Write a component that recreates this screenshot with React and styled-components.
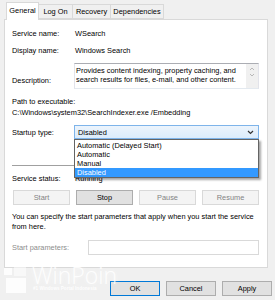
import React from 'react'
import styled, { createGlobalStyle } from 'styled-components'

const Global = createGlobalStyle`
  html, body { margin: 0; padding: 0; background: #f0f0f0; }
  body { font-family: "Liberation Sans", Arial, sans-serif; font-size: 7.4px; color: #000; }
`

const Dialog = styled.div`
  position: relative;
  width: 275px;
  height: 300px;
  overflow: hidden;
  background: #f0f0f0;
  display: flex;
  flex-direction: column;
`

const TabStrip = styled.div`
  display: flex;
  align-items: flex-end;
  height: 19px;
  padding-left: 6px;
  position: relative;
  z-index: 1;
`

const Tab = styled.div`
  box-sizing: border-box;
  width: ${p => p.$w}px;
  height: ${p => (p.$active ? 18 : 15)}px;
  margin-bottom: ${p => (p.$active ? -1 : 0)}px;
  border: 1px solid #d9d9d9;
  border-bottom: ${p => (p.$active ? 'none' : '1px solid #d9d9d9')};
  margin-left: ${p => (p.$first ? 0 : -1)}px;
  background: ${p => (p.$active ? '#fff' : '#f0f0f0')};
  display: flex;
  align-items: center;
  justify-content: center;
  padding-bottom: ${p => (p.$active ? 2 : 0)}px;
  white-space: nowrap;
`

const Panel = styled.div`
  box-sizing: border-box;
  margin-left: 4px;
  width: 264px;
  height: 249px;
  border: 1px solid #d9d9d9;
  background: #fff;
  padding: 8px 8px 0 7px;
  display: flex;
  flex-direction: column;
`

const Row = styled.div`
  display: flex;
  align-items: ${p => p.$align || 'center'};
  height: ${p => p.$h || 10}px;
  margin-top: ${p => p.$mt || 0}px;
`

const Label = styled.div`
  width: ${p => p.$w || 62}px;
  flex-shrink: 0;
  padding-top: ${p => p.$pt || 0}px;
  color: ${p => (p.$disabled ? '#8d8d8d' : '#000')};
  white-space: nowrap;
`

const Value = styled.div`
  padding-left: ${p => (p.$flush ? 0 : 1)}px;
  white-space: nowrap;
`

const TextBox = styled.div`
  box-sizing: border-box;
  flex: 1;
  height: 100%;
  border: 1px solid #abadb3;
  border-color: #abadb3 #e2e3ea #e3e9ef #e2e3ea;
  display: flex;
  background: #fff;
`

const DescText = styled.div`
  flex: 1;
  padding: 2px 1px 0 1px;
  line-height: 9px;
`

const ScrollBar = styled.div`
  width: 12px;
  background: #f0f0f0;
  display: flex;
  flex-direction: column;
  align-items: center;
  padding-top: 3px;
  gap: 2px;
`

const Select = styled.div`
  box-sizing: border-box;
  flex: 1;
  height: 100%;
  border: 1px solid #7eb4ea;
  background: linear-gradient(#ecf4fc, #dcecfc);
  display: flex;
  align-items: center;
  justify-content: space-between;
  padding: 0 4px 0 3px;
  position: relative;
`

const DropList = styled.div`
  position: absolute;
  top: 13px;
  left: -1px;
  right: -1px;
  box-sizing: border-box;
  border: 1px solid #646464;
  background: #fff;
  box-shadow: 2px 2px 2px rgba(0, 0, 0, 0.35);
  padding: 1px 0 0 0;
  z-index: 5;
`

const Option = styled.div`
  height: 9px;
  line-height: 9px;
  padding-left: 2px;
  background: ${p => (p.$selected ? '#3399ff' : 'transparent')};
  color: ${p => (p.$selected ? '#fff' : '#000')};
  white-space: nowrap;
`

const Separator = styled.div`
  height: 1px;
  background: #a0a0a0;
  margin-top: 26px;
`

const ButtonRow = styled.div`
  display: flex;
  gap: 6px;
  margin-top: ${p => p.$mt || 0}px;
  padding-left: ${p => p.$pl || 0}px;
`

const Button = styled.div`
  box-sizing: border-box;
  width: ${p => p.$w || 57}px;
  height: 15px;
  display: flex;
  align-items: center;
  justify-content: center;
  border: 1px solid ${p => (p.$default ? '#0078d7' : p.$disabled ? '#d9d9d9' : '#adadad')};
  background: ${p => (p.$disabled ? '#f4f4f4' : '#e1e1e1')};
  color: ${p => (p.$disabled ? '#838383' : '#000')};
`

const Paragraph = styled.div`
  margin-top: 7px;
  line-height: 10px;
  height: 20px;
`

const Input = styled.div`
  box-sizing: border-box;
  flex: 1;
  height: 100%;
  border: 1px solid #d9d9d9;
  background: #fff;
`

const Footer = styled.div`
  display: flex;
  justify-content: flex-end;
  gap: 6px;
  margin-top: 13px;
  padding-right: 3px;
`

const Watermark = styled.div`
  position: absolute;
  left: 4px;
  top: 265px;
  display: flex;
  align-items: flex-start;
  gap: 4px;
  color: #fff;
  z-index: 6;
  pointer-events: none;
`

const Brand = styled.div`
  display: flex;
  flex-direction: column;
`

const BrandName = styled.div`
  font-family: "Open Sans", "Noto Sans", sans-serif;
  font-size: 23px;
  line-height: 21px;
  height: 21px;
  font-weight: 300;
  color: rgba(255, 255, 255, 0.9);
  text-shadow: 0 0 4px rgba(255, 255, 255, 0.7);
`

const BrandSub = styled.div`
  font-size: 4.6px;
  line-height: 6px;
  font-weight: bold;
  color: rgba(255, 255, 255, 0.95);
  margin-left: 1px;
  white-space: nowrap;
`

const Chevron = () => (
  <svg width="7" height="5" viewBox="0 0 7 5">
    <path d="M1 1 L3.5 3.5 L6 1" fill="none" stroke="#333" strokeWidth="1.2" />
  </svg>
)

const Arrow = ({ up }) => (
  <svg width="6" height="4" viewBox="0 0 6 4">
    <path d={up ? 'M1 3 L3 1 L5 3' : 'M1 1 L3 3 L5 1'} fill="none" stroke="#b8b8b8" strokeWidth="1" />
  </svg>
)

const Logo = () => (
  <svg width="24" height="32" viewBox="0 0 24 32">
    <rect x="0" y="3" width="8" height="7" fill="rgba(255,255,255,0.85)" />
    <rect x="10" y="0" width="12" height="11" fill="rgba(255,255,255,0.5)" />
    <rect x="2" y="13" width="20" height="15" fill="rgba(255,255,255,0.85)" />
  </svg>
)

export default function App() {
  const options = ['Automatic (Delayed Start)', 'Automatic', 'Manual', 'Disabled']
  return (
    <Dialog>
      <Global />
      <TabStrip>
        <Tab $w={33} $active $first>General</Tab>
        <Tab $w={35}>Log On</Tab>
        <Tab $w={39}>Recovery</Tab>
        <Tab $w={54}>Dependencies</Tab>
      </TabStrip>
      <Panel>
        <Row>
          <Label>Service name:</Label>
          <Value>WSearch</Value>
        </Row>
        <Row $mt={7}>
          <Label>Display name:</Label>
          <Value>Windows Search</Value>
        </Row>
        <Row $mt={8} $h={26} $align="flex-start">
          <Label $pt={13}>Description:</Label>
          <TextBox>
            <DescText>
              Provides content indexing, property caching, and search results for files, e-mail, and other content.
            </DescText>
            <ScrollBar>
              <Arrow up />
              <Arrow />
            </ScrollBar>
          </TextBox>
        </Row>
        <Row $mt={7}>
          <Label>Path to executable:</Label>
        </Row>
        <Row $mt={1}>
          <Value $flush>C:\Windows\system32\SearchIndexer.exe /Embedding</Value>
        </Row>
        <Row $mt={8} $h={14}>
          <Label>Startup type:</Label>
          <Select>
            <span>Disabled</span>
            <Chevron />
            <DropList>
              {options.map(o => (
                <Option key={o} $selected={o === 'Disabled'}>{o}</Option>
              ))}
            </DropList>
          </Select>
        </Row>
        <Separator />
        <Row $mt={7}>
          <Label>Service status:</Label>
          <Value>Running</Value>
        </Row>
        <ButtonRow $mt={7} $pl={1}>
          <Button $disabled>Start</Button>
          <Button>Stop</Button>
          <Button $disabled>Pause</Button>
          <Button $disabled>Resume</Button>
        </ButtonRow>
        <Paragraph>
          You can specify the start parameters that apply when you start the service from here.
        </Paragraph>
        <Row $mt={8} $h={15}>
          <Label $w={76} $disabled>Start parameters:</Label>
          <Input />
        </Row>
      </Panel>
      <Footer>
        <Button $w={50} $default>OK</Button>
        <Button $w={50}>Cancel</Button>
        <Button $w={50}>Apply</Button>
      </Footer>
      <Watermark>
        <Logo />
        <Brand>
          <BrandName>WinPoin</BrandName>
          <BrandSub>#1 Windows Portal Indonesia</BrandSub>
        </Brand>
      </Watermark>
    </Dialog>
  )
}
